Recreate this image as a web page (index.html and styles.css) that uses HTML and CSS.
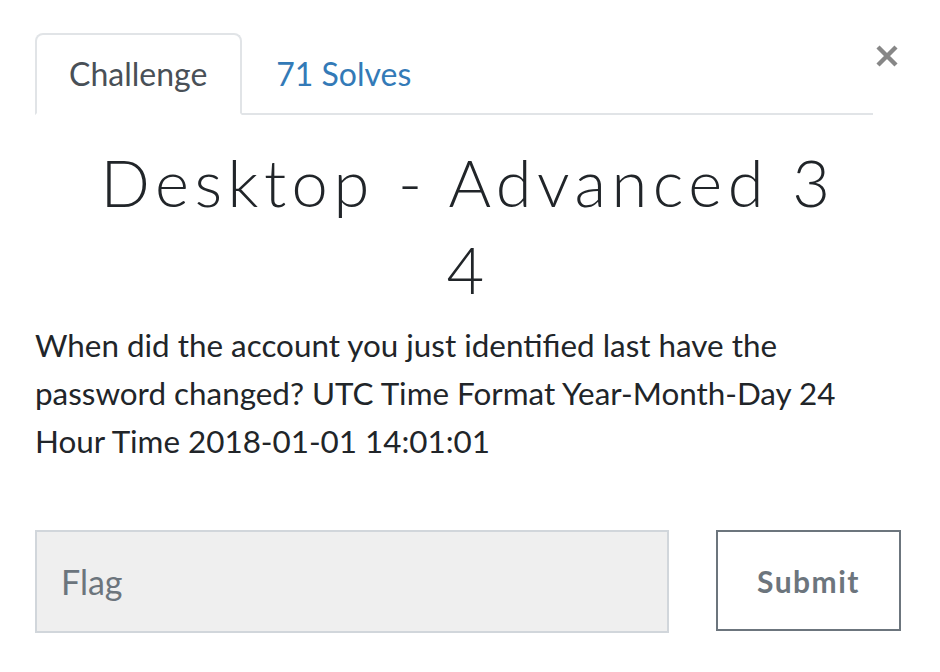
FILE: index.html
```html
<!DOCTYPE html>
<html>
<head>
<meta charset="utf-8">
<link rel="stylesheet" href="styles.css">
</head>
<body>
<div class="modal">
  <div class="header">
    <ul class="tabs">
      <li class="tab active">Challenge</li>
      <li class="tab link">71 Solves</li>
    </ul>
    <button class="close" aria-label="Close">
      <svg width="24" height="24" viewBox="0 0 24 24"><path d="M3 3 L21 21 M21 3 L3 21" stroke="#878787" stroke-width="4.4"/></svg>
    </button>
  </div>
  <h1 class="title">Desktop - Advanced 3 4</h1>
  <p class="desc">When did the account you just identified last have the password changed? UTC Time Format Year-Month-Day 24 Hour Time 2018-01-01 14:01:01</p>
  <form class="flag-row">
    <input class="flag" type="text" placeholder="Flag">
    <button class="submit" type="button">Submit</button>
  </form>
</div>
</body>
</html>
```
FILE: styles.css
```css
html, body {
  margin: 0;
  padding: 0;
  background: #fff;
}
body {
  font-family: Lato, "Noto Sans", sans-serif;
  color: #212529;
}
.modal {
  width: 866px;
  padding: 33px 0 0 35px;
}
.header {
  display: flex;
  align-items: flex-start;
}
.tabs {
  flex: 1;
  display: flex;
  list-style: none;
  margin: 0;
  padding: 0;
  border-bottom: 2px solid #e1e4e7;
}
.tab {
  font-size: 32px;
  height: 82px;
  box-sizing: border-box;
  padding: 0 33px 0 32px;
  line-height: 78px;
  margin-bottom: -2px;
  border: 2px solid transparent;
  border-radius: 8px 8px 0 0;
}
.tab.active {
  color: #495057;
  background: #fff;
  border-color: #e1e4e7 #e1e4e7 #fff;
}
.tab.link {
  color: #337ab7;
}
.close {
  width: 28px;
  margin: 11px 0 0 0;
  padding: 0;
  border: 0;
  background: none;
  display: flex;
  justify-content: center;
}
.title {
  font-family: Lato, sans-serif;
  font-weight: 300;
  font-size: 65px;
  letter-spacing: 5.5px;
  line-height: 87px;
  text-align: center;
  margin: 24px 0 0;
  padding: 0 50px;
}
.desc {
  font-size: 31.4px;
  line-height: 48px;
  margin: 8px 0 0;
}
.flag-row {
  display: flex;
  gap: 47px;
  margin-top: 65px;
  align-items: flex-start;
}
.flag {
  width: 634px;
  height: 103px;
  box-sizing: border-box;
  background: #efefef;
  border: 2px solid #d1d6db;
  font-family: Lato, sans-serif;
  font-size: 34px;
  padding: 0 24px;
  color: #495057;
}
.flag::placeholder {
  color: #6c757d;
}
.submit {
  width: 185px;
  height: 101px;
  box-sizing: border-box;
  background: #fff;
  border: 2px solid #6c757d;
  color: #6c757d;
  font-family: Lato, sans-serif;
  font-weight: 700;
  font-size: 30px;
  letter-spacing: 1.5px;
}
```
